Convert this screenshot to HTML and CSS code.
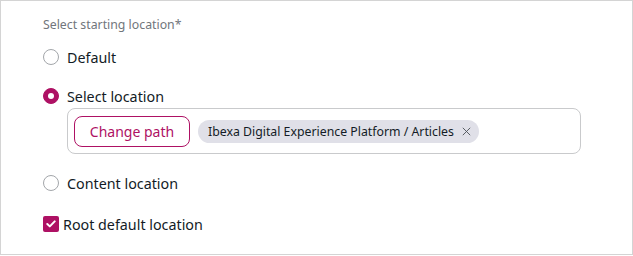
FILE: index.html
```html
<!DOCTYPE html>
<html lang="en">
<head>
    <meta charset="UTF-8">
    <meta name="viewport" content="width=device-width, initial-scale=1.0">
    <title>Starting location</title>
    <link rel="stylesheet" href="styles.css">
</head>
<body>
    <div class="panel">
        <div class="field-label">Select starting location*</div>
        <label class="radio-row first">
            <span class="radio"></span>
            <span class="radio-text">Default</span>
        </label>
        <label class="radio-row">
            <span class="radio checked"></span>
            <span class="radio-text">Select location</span>
        </label>
        <div class="path-box">
            <button class="btn-outline">Change path</button>
            <span class="chip">
                Ibexa Digital Experience Platform / Articles
                <svg class="chip-close" width="9" height="9" viewBox="0 0 9 9"><path d="M0.8 0.8 L8.2 8.2 M8.2 0.8 L0.8 8.2" stroke="#4a4f55" stroke-width="0.9" fill="none"/></svg>
            </span>
        </div>
        <label class="radio-row spaced">
            <span class="radio"></span>
            <span class="radio-text">Content location</span>
        </label>
        <label class="check-row">
            <span class="checkbox">
                <svg width="10" height="8" viewBox="0 0 10 8"><path d="M1.3 4 L3.8 6.4 L8.7 1.4" stroke="#fff" stroke-width="2" fill="none" stroke-linecap="round" stroke-linejoin="round"/></svg>
            </span>
            <span class="check-text">Root default location</span>
        </label>
    </div>
</body>
</html>
```

FILE: styles.css
```css
body { margin: 0; padding: 0; background-color: #fff; font-family: "Noto Sans", Arial, sans-serif; color: #131c26; }
.panel { box-sizing: border-box; width: 633px; height: 255px; border: 1px solid #d4d4d4; padding: 14px 0 0 42px; }
.field-label { font-size: 12.3px; line-height: 20px; color: #71767c; }
.radio-row { display: flex; align-items: center; height: 24px; margin-top: 15px; font-size: 14.3px; cursor: pointer; }
.radio-row.first { margin-top: 10px; }
.radio-row.spaced { margin-top: 17px; }
.radio { box-sizing: border-box; width: 16px; height: 16px; border: 1px solid #a3a6aa; border-radius: 50%; margin-right: 8px; background: #fff; display: flex; align-items: center; justify-content: center; }
.radio.checked { background: #ae1164; border-color: #ae1164; }
.radio.checked::after { content: ""; width: 6px; height: 6px; border-radius: 50%; background: #fff; }
.path-box { box-sizing: border-box; width: 514px; height: 46px; margin-left: 24px; border: 1px solid #c9cacc; border-radius: 8px; padding: 6px; display: flex; align-items: center; gap: 8px; }
.btn-outline { box-sizing: border-box; height: 31px; width: 116px; border: 1px solid #ae1164; border-radius: 8px; background: #fff; color: #ae1164; font-family: "Noto Sans", Arial, sans-serif; font-size: 14px; padding: 0; cursor: pointer; }
.chip { display: inline-flex; align-items: center; height: 23px; padding: 0 8px 0 10px; border-radius: 12px; background: #e0e0e8; font-size: 12.3px; color: #131c26; gap: 8px; }
.chip-close { display: block; }
.check-row { display: flex; align-items: center; height: 24px; margin-top: 17px; font-size: 14.3px; }
.checkbox { width: 16px; height: 16px; border-radius: 2px; background: #ae1164; margin-right: 4px; display: flex; align-items: center; justify-content: center; }
```
